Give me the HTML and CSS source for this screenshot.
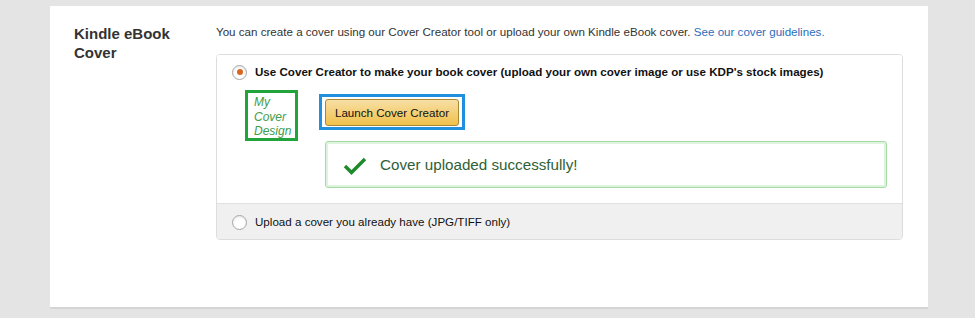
FILE: index.html
```html
<!DOCTYPE html>
<html>
<head>
<meta charset="utf-8">
<link rel="stylesheet" href="styles.css">
</head>
<body>
<div class="panel">
  <h2 class="heading">Kindle eBook Cover</h2>
  <div class="content">
    <p class="intro">You can create a cover using our Cover Creator tool or upload your own Kindle eBook cover. <a href="#" class="link">See our cover guidelines.</a></p>
    <div class="options">
      <div class="option option-top">
        <label class="radio-row bold">
          <span class="radio checked"></span>
          Use Cover Creator to make your book cover (upload your own cover image or use KDP's stock images)
        </label>
        <div class="creator">
          <div class="thumb">My Cover Design</div>
          <div class="creator-main">
            <div class="highlight"><button class="btn">Launch Cover Creator</button></div>
            <div class="success">
              <svg class="check" width="24" height="18" viewBox="0 0 24 18"><polyline points="2,9 8.5,15.5 22,2" fill="none" stroke="#1d8a2c" stroke-width="3.4" stroke-linecap="butt"/></svg>
              <span>Cover uploaded successfully!</span>
            </div>
          </div>
        </div>
      </div>
      <div class="option option-bottom">
        <label class="radio-row">
          <span class="radio"></span>
          Upload a cover you already have (JPG/TIFF only)
        </label>
      </div>
    </div>
  </div>
</div>
</body>
</html>
```

FILE: styles.css
```css
html, body {
  margin: 0;
  padding: 0;
  background: #e4e4e4;
  font-family: Arial, "Liberation Sans", sans-serif;
  color: #333;
}

.panel {
  margin: 6px 0 0 50px;
  width: 878px;
  height: 301px;
  background: #fff;
  border-bottom: 2px solid #d5d5d5;
  display: flex;
}

.heading {
  margin: 0;
  padding: 18px 0 0 24px;
  width: 142px;
  flex: none;
  font-size: 15px;
  line-height: 19px;
  font-weight: bold;
  color: #333;
}

.content {
  padding-top: 18px;
  width: 687px;
  flex: none;
}

.intro {
  margin: 0;
  font-size: 11.6px;
  line-height: 16px;
  color: #333;
}

.link {
  color: #2a6ebb;
  text-decoration: none;
}

.options {
  margin-top: 14px;
  border: 1px solid #ddd;
  border-radius: 4px;
  overflow: hidden;
}

.option-top {
  padding: 9px 15px 15px 15px;
  background: #fff;
}

.option-bottom {
  background: #f0f0f0;
  border-top: 1px solid #e0e0e0;
  padding: 10px 15px 9px;
}

.radio-row {
  display: flex;
  align-items: center;
  font-size: 11.6px;
  line-height: 16px;
  color: #111;
}

.radio-row.bold {
  font-weight: bold;
}

.radio {
  width: 13px;
  height: 13px;
  border: 1px solid #a6a6a6;
  border-radius: 50%;
  background: #fff;
  margin-right: 8px;
  box-shadow: inset 0 1px 2px rgba(0,0,0,0.12);
  display: flex;
  align-items: center;
  justify-content: center;
  flex: none;
}

.radio.checked::after {
  content: "";
  width: 6px;
  height: 6px;
  border-radius: 50%;
  background: #d9661f;
}

.creator {
  display: flex;
  margin-top: 10px;
}

.thumb {
  margin-left: 13px;
  width: 38px;
  height: 39px;
  border: 3px solid #22a33b;
  padding: 2px 3px 4px 6px;
  font-size: 12px;
  line-height: 14.5px;
  font-style: italic;
  color: #3f9c4c;
  flex: none;
}

.creator-main {
  margin-left: 21px;
  flex: 1;
  padding-top: 4px;
}

.highlight {
  display: inline-block;
  border: 3px solid #1f8fde;
  padding: 2px 3px 1px;
}

.btn {
  display: block;
  width: 134px;
  height: 27px;
  border: 1px solid #a88734;
  border-radius: 3px;
  background: linear-gradient(#f7dfa5, #f0c14b);
  font-family: Arial, "Liberation Sans", sans-serif;
  font-size: 11.6px;
  color: #111;
  padding: 0;
}

.success {
  margin: 11px 0 0 6px;
  height: 47px;
  box-sizing: border-box;
  border: 1px solid #a6d9a6;
  border-radius: 3px;
  box-shadow: inset 0 0 0 2px #def4de;
  display: flex;
  align-items: center;
  padding-left: 17px;
  font-size: 15.2px;
  color: #2f6137;
}

.check {
  margin-right: 13px;
  margin-top: 2px;
}
```
